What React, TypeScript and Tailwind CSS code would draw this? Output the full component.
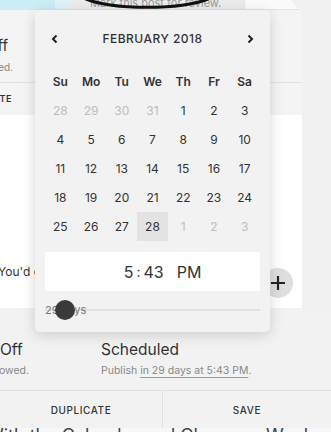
import React from "react";

const font = { fontFamily: "Inter, 'Noto Sans', sans-serif" };

const weekdays = ["Su", "Mo", "Tu", "We", "Th", "Fr", "Sa"];

// [day, muted]
const days: [number, boolean][] = [
  [28, true], [29, true], [30, true], [31, true], [1, false], [2, false], [3, false],
  ...Array.from({ length: 21 }, (_, i) => [i + 4, false] as [number, boolean]),
  [25, false], [26, false], [27, false], [28, false], [1, true], [2, true], [3, true],
];

const Chevron: React.FC<{ dir: "left" | "right" }> = ({ dir }) => (
  <svg width="8" height="10" viewBox="0 0 8 10" fill="none">
    <path
      d={dir === "left" ? "M5.5 1.5 2 5l3.5 3.5" : "M2.5 1.5 6 5 2.5 8.5"}
      stroke="#222"
      strokeWidth="2"
    />
  </svg>
);

const Calendar: React.FC = () => (
  <div className="absolute left-[35px] top-[10px] z-20 flex h-[322px] w-[235px] flex-col rounded-[5px] bg-[#f2f2f2] px-[10px] pt-[19px] shadow-[0_3px_14px_rgba(0,0,0,0.16)]">
    {/* header */}
    <div className="flex h-[20px] items-center justify-between px-[6px]">
      <Chevron dir="left" />
      <span className="text-[12px] font-medium tracking-[0.04em] text-[#333]">FEBRUARY 2018</span>
      <Chevron dir="right" />
    </div>

    {/* weekday + days */}
    <div className="mt-[18px] grid grid-cols-7">
      {weekdays.map((w) => (
        <div key={w} className="flex h-[29px] items-center justify-center text-[12px] font-semibold text-[#333]">
          {w}
        </div>
      ))}
      {days.map(([d, muted], i) => (
        <div
          key={i}
          className={
            "flex h-[29px] items-center justify-center text-[12px] " +
            (i === 31 ? "bg-[#e3e3e3] text-[#222] " : "") +
            (muted ? "text-[#bdbdbd]" : "text-[#333]")
          }
        >
          {d}
        </div>
      ))}
    </div>

    {/* time */}
    <div className="mt-[11px] flex h-[39px] items-center justify-center gap-[13px] bg-white pl-[20px] text-[16px] text-[#333]">
      <span className="flex items-center gap-[3px]">
        <span>5</span>
        <span className="text-[14px]">:</span>
        <span>43</span>
      </span>
      <span>PM</span>
    </div>

    {/* slider */}
    <div className="relative mt-[9px] flex h-[20px] items-center">
      <div className="h-[2px] w-full bg-[#e0e0e0]" />
      <span className="absolute left-0 text-[11px] text-[#777]">29 days</span>
      <div className="absolute left-[10px] h-[20px] w-[20px] rounded-full bg-[#3a3a3a]" />
    </div>
  </div>
);

export default function App() {
  return (
    <div className="relative h-[432px] w-[331px] overflow-hidden bg-[#f1f1f1]" style={font}>
      {/* main white panel */}
      <div className="relative h-[308px] w-[302px] bg-white [clip-path:polygon(0_0,290px_0,302px_13px,302px_100%,0_100%)]">
        {/* top strip */}
        <div className="flex h-[10px] border-b border-[#e2e2e2]">
          <div className="w-[55px] bg-[#cdeef6]" />
          <div className="w-[17px] bg-[#dff3f8]" />
          <div className="flex w-[173px] items-end overflow-hidden border-r border-[#e6e6e6] bg-[#ececec] pl-[18px]">
            <span className="whitespace-nowrap text-[11px] leading-[11px] text-[#999]">Mark this post for review.</span>
          </div>
          <div className="flex-1 bg-[#fbfbfb]" />
        </div>

        {/* grey settings card */}
        <div className="h-[105px] bg-[#f4f4f4]">
          <div className="flex h-[72px] flex-col pt-[25px]">
            <div className="flex w-[8px] justify-end whitespace-nowrap text-[15px] text-[#333]">Comments Off</div>
            <div className="mt-[2px] flex w-[13px] justify-end whitespace-nowrap text-[10px] text-[#888]">Not allowed.</div>
          </div>
          <div className="flex h-[33px] items-center border-t border-[#e2e2e2]">
            <div className="flex w-[12px] justify-end whitespace-nowrap text-[9px] font-semibold tracking-[0.06em] text-[#333]">DELETE</div>
          </div>
        </div>

        <div className="-ml-[2px] mt-[148px] whitespace-nowrap text-[12px] text-[#333]">You'd get the best results here.</div>

        <div className="absolute left-[263px] top-[268px] flex h-[30px] w-[30px] items-center justify-center rounded-full bg-[#dedede]">
          <svg width="14" height="14" viewBox="0 0 14 14">
            <path d="M7 0v14M0 7h14" stroke="#222" strokeWidth="2.2" />
          </svg>
        </div>
      </div>

      {/* hand-drawn annotation ring around the review toggle (mostly off-screen) */}
      <svg className="absolute left-[84px] top-0 z-10" width="126" height="12" viewBox="0 0 126 12" fill="none">
        <path d="M2 -1 C 30 10, 96 10, 124 -1" stroke="#111" strokeWidth="3" strokeLinecap="round" />
      </svg>

      {/* status row */}
      <div className="flex h-[82px] items-start bg-[#f2f2f2] pt-[30px]">
        <div className="flex w-[101px] flex-col">
          <span className="text-[15.5px] text-[#333]">Off</span>
          <div className="mt-[2px] flex w-[29px] justify-end whitespace-nowrap text-[10.5px] text-[#888]">Not allowed.</div>
        </div>
        <div className="flex flex-col">
          <span className="text-[15.5px] text-[#333]">Scheduled</span>
          <span className="mt-[2px] whitespace-nowrap text-[10.5px] text-[#888]">
            Publish <span className="underline decoration-[#999] underline-offset-[3px]">in 29 days at 5:43 PM</span>.
          </span>
        </div>
      </div>

      {/* buttons */}
      <div className="flex h-[38px] border-t border-[#e0e0e0] bg-[#f2f2f2]">
        <div className="flex w-[163px] items-center justify-center border-r border-[#e0e0e0] pt-[2px] text-[10px] font-medium tracking-[0.06em] text-[#333]">
          DUPLICATE
        </div>
        <div className="flex flex-1 items-center justify-center pt-[2px] text-[10px] font-medium tracking-[0.06em] text-[#333]">
          SAVE
        </div>
      </div>

      {/* clipped article text */}
      <div className="h-[4px] overflow-hidden bg-[#f7f7f7]">
        <div className="-ml-[14px] mt-[-1px] whitespace-nowrap text-[18px] leading-none text-[#444]">
          With the Calendar and Choose a Week
        </div>
      </div>

      <Calendar />
    </div>
  );
}
